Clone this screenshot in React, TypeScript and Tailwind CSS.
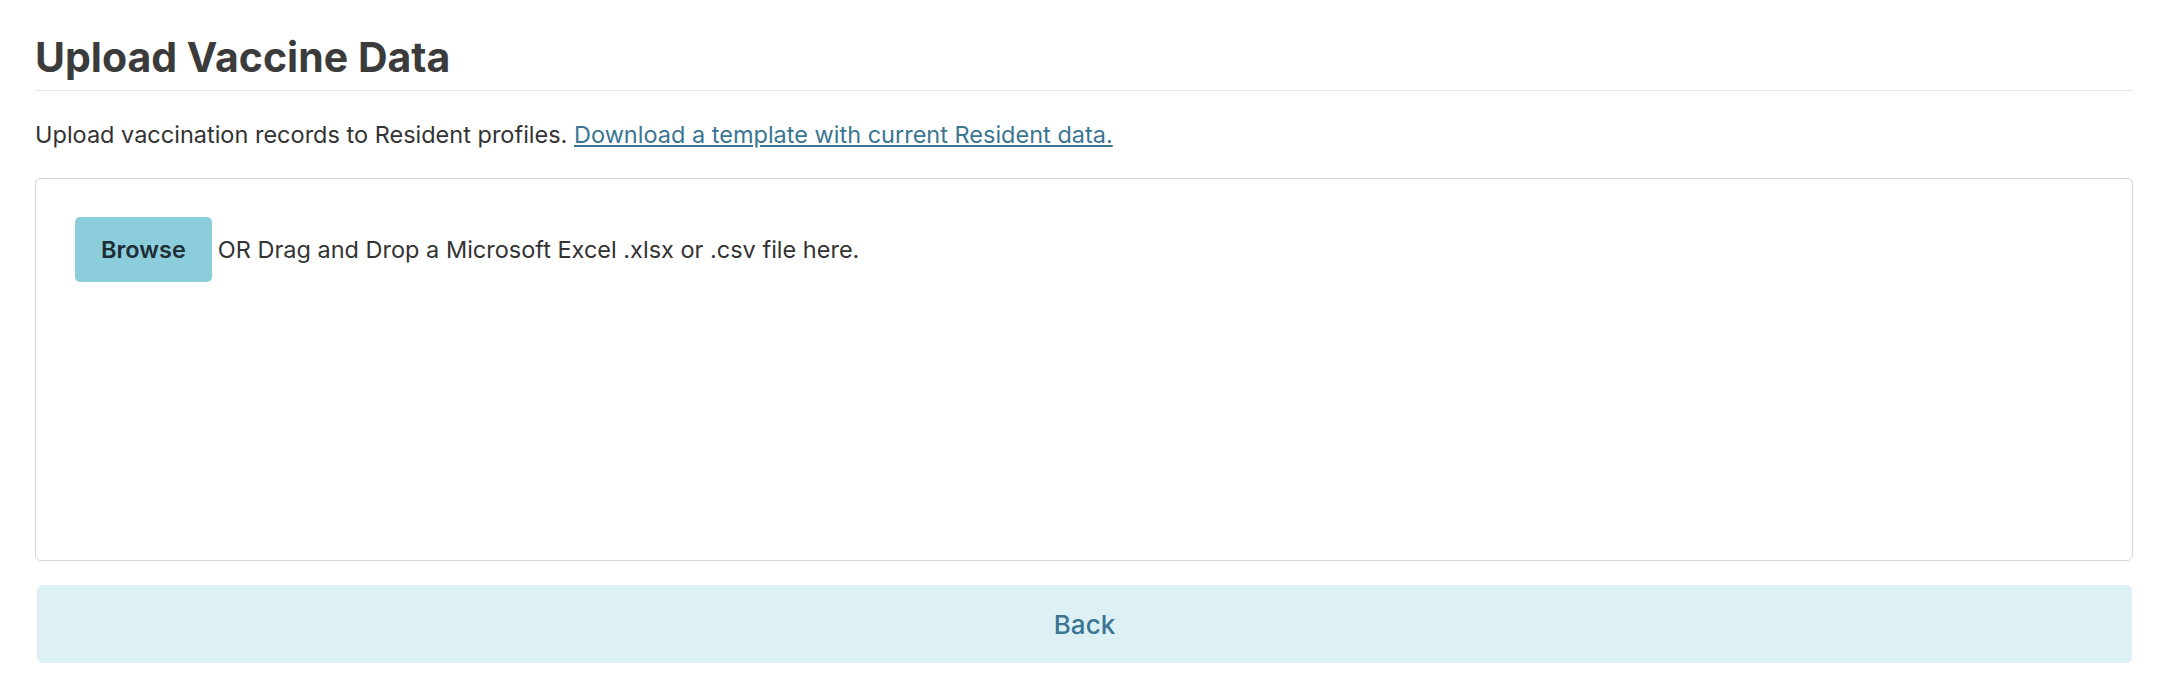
export default function App() {
  return (
    <main className="min-h-screen bg-white px-[35px] pt-[33px] font-['Inter','Liberation_Sans',sans-serif] text-[#333333]">
      <h1 className="border-b border-[#e6e6e6] pb-[8px] text-[41px] font-bold leading-[1.2] text-[#3b3b3b]">
        Upload Vaccine Data
      </h1>
      <p className="mt-[27px] text-[23.5px] leading-[33px]">
        Upload vaccination records to Resident profiles.{" "}
        <a href="#" className="text-[#3a7591] underline">
          Download a template with current Resident data.
        </a>
      </p>
      <section className="mt-[27px] h-[383px] rounded-[6px] border border-[#d4d4d4] px-[39px] py-[38px]">
        <div className="flex items-center gap-[6px]">
          <button
            type="button"
            className="h-[65px] rounded-[5px] bg-[#8bcddb] px-[26px] text-[23.5px] font-semibold text-[#1f2d36]"
          >
            Browse
          </button>
          <span className="text-[23.5px]">OR Drag and Drop a Microsoft Excel .xlsx or .csv file here.</span>
        </div>
      </section>
      <button
        type="button"
        className="mt-[24px] ml-[2px] flex h-[78px] w-[calc(100%-3px)] items-center justify-center rounded-[6px] bg-[#ddf1f5] text-[26px] font-medium text-[#3a7591]"
      >
        Back
      </button>
    </main>
  );
}
